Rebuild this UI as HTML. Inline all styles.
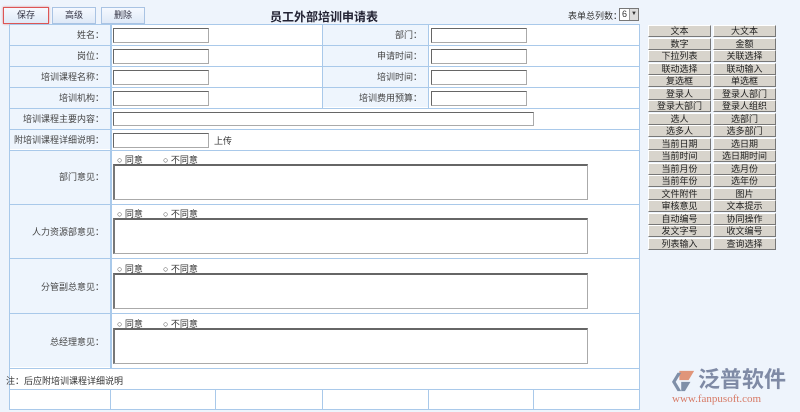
<!DOCTYPE html>
<html><head><meta charset="utf-8"><style>
*{margin:0;padding:0;box-sizing:border-box}
body{width:800px;height:412px;background:#eef4fc;font-family:"Liberation Sans","Noto Sans CJK SC",sans-serif;font-size:9px;color:#333;position:relative;overflow:hidden}
.a{position:absolute}
.btn{position:absolute;top:7px;height:17px;border:1px solid #a9c3e3;background:linear-gradient(#f5f9ff,#dfe9f7);font-size:9px;text-align:center;line-height:15px;color:#334}
.tbl{position:absolute;left:9px;top:24px;width:631px;height:386px;background:#fff;border:1px solid #a9c9ea}
.h{position:absolute;background:#a9c9ea;height:1px}
.v{position:absolute;background:#a9c9ea;width:1px}
.lab{position:absolute;background:#eef5fd;text-align:right;padding-right:6px;font-size:9px;color:#444}
.in{position:absolute;background:#fff;border:1px solid #aaa;border-top-color:#666;border-left-color:#666;height:15px}
.ta{position:absolute;left:113px;width:475px;height:36px;background:#fff;border:1px solid #aaa;border-top:2px solid #666;border-left:2px solid #777}
.rad{position:absolute;left:117px;font-size:9px;color:#333}
.rb{position:absolute;width:63px;height:12px;background:#d8d4cc;border-right:1px solid #777;border-bottom:1px solid #777;border-top:1px solid #fff;border-left:1px solid #fff;font-size:9px;text-align:center;line-height:10px;color:#222}
</style></head><body>
<div class="btn" style="left:3px;width:46px;border:1px solid #d55;box-shadow:0 0 2px #d88">保存</div>
<div class="btn" style="left:52px;width:44px">高级</div>
<div class="btn" style="left:101px;width:44px">删除</div>
<div class="a" style="left:270px;top:8px;font-size:12px;font-weight:bold;color:#223">员工外部培训申请表</div>
<div class="a" style="left:568px;top:9px;font-size:9px">表单总列数：</div>
<div class="a" style="left:619px;top:8px;width:20px;height:13px;border:1px solid #777;background:#fff;font-size:9px;padding-left:2px;line-height:11px">6<span style="position:absolute;right:0;top:0;width:9px;height:11px;background:#ddd;border-left:1px solid #999;font-size:6px;text-align:center">▼</span></div>

<div class="tbl"></div>
<div class="lab" style="left:10px;top:25px;width:100px;height:124px"></div>
<div class="lab" style="left:323px;top:25px;width:105px;height:82px"></div>
<div class="lab" style="left:10px;top:151px;width:100px;height:216px"></div>
<div class="lab" style="left:10px;top:25px;width:100px;line-height:20px;background:none">姓名：</div>
<div class="lab" style="left:10px;top:46px;width:100px;line-height:20px;background:none">岗位：</div>
<div class="lab" style="left:10px;top:67px;width:100px;line-height:20px;background:none">培训课程名称：</div>
<div class="lab" style="left:10px;top:88px;width:100px;line-height:20px;background:none">培训机构：</div>
<div class="lab" style="left:10px;top:109px;width:100px;line-height:20px;background:none">培训课程主要内容：</div>
<div class="lab" style="left:10px;top:130px;width:100px;line-height:20px;background:none">附培训课程详细说明：</div>
<div class="lab" style="left:323px;top:25px;width:105px;line-height:20px;background:none">部门：</div>
<div class="lab" style="left:323px;top:46px;width:105px;line-height:20px;background:none">申请时间：</div>
<div class="lab" style="left:323px;top:67px;width:105px;line-height:20px;background:none">培训时间：</div>
<div class="lab" style="left:323px;top:88px;width:105px;line-height:20px;background:none">培训费用预算：</div>
<div class="lab" style="left:10px;top:170px;width:100px;background:none">部门意见：</div>
<div class="lab" style="left:10px;top:225px;width:100px;background:none">人力资源部意见：</div>
<div class="lab" style="left:10px;top:280px;width:100px;background:none">分管副总意见：</div>
<div class="lab" style="left:10px;top:335px;width:100px;background:none">总经理意见：</div>
<div class="a" style="left:6px;top:374px">注：后应附培训课程详细说明</div>

<div class="h" style="left:9px;top:45px;width:631px"></div>
<div class="h" style="left:9px;top:66px;width:631px"></div>
<div class="h" style="left:9px;top:87px;width:631px"></div>
<div class="h" style="left:9px;top:108px;width:631px"></div>
<div class="h" style="left:9px;top:129px;width:631px"></div>
<div class="h" style="left:9px;top:150px;width:631px"></div>
<div class="h" style="left:9px;top:204px;width:631px"></div>
<div class="h" style="left:9px;top:258px;width:631px"></div>
<div class="h" style="left:9px;top:313px;width:631px"></div>
<div class="h" style="left:9px;top:368px;width:631px"></div>
<div class="h" style="left:9px;top:389px;width:631px"></div>
<div class="v" style="left:110px;top:24px;height:344px;width:2px"></div>
<div class="v" style="left:322px;top:24px;height:84px"></div>
<div class="v" style="left:428px;top:24px;height:84px"></div>
<div class="v" style="left:110px;top:389px;height:21px"></div>
<div class="v" style="left:215px;top:389px;height:21px"></div>
<div class="v" style="left:322px;top:389px;height:21px"></div>
<div class="v" style="left:428px;top:389px;height:21px"></div>
<div class="v" style="left:533px;top:389px;height:21px"></div>

<div class="in" style="left:113px;top:28px;width:96px"></div>
<div class="in" style="left:113px;top:49px;width:96px"></div>
<div class="in" style="left:113px;top:70px;width:96px"></div>
<div class="in" style="left:113px;top:91px;width:96px"></div>
<div class="in" style="left:431px;top:28px;width:96px"></div>
<div class="in" style="left:431px;top:49px;width:96px"></div>
<div class="in" style="left:431px;top:70px;width:96px"></div>
<div class="in" style="left:431px;top:91px;width:96px"></div>
<div class="in" style="left:113px;top:112px;width:421px;height:14px"></div>
<div class="in" style="left:113px;top:133px;width:96px"></div>
<div class="a" style="left:214px;top:134px">上传</div>

<div class="rad" style="top:153px">○ 同意&nbsp;&nbsp;&nbsp;&nbsp;&nbsp;&nbsp;&nbsp;&nbsp;○ 不同意</div>
<div class="ta" style="top:164px"></div>
<div class="rad" style="top:207px">○ 同意&nbsp;&nbsp;&nbsp;&nbsp;&nbsp;&nbsp;&nbsp;&nbsp;○ 不同意</div>
<div class="ta" style="top:218px"></div>
<div class="rad" style="top:262px">○ 同意&nbsp;&nbsp;&nbsp;&nbsp;&nbsp;&nbsp;&nbsp;&nbsp;○ 不同意</div>
<div class="ta" style="top:273px"></div>
<div class="rad" style="top:317px">○ 同意&nbsp;&nbsp;&nbsp;&nbsp;&nbsp;&nbsp;&nbsp;&nbsp;○ 不同意</div>
<div class="ta" style="top:328px"></div>

<div class="rb" style="left:648px;top:25px">文本</div><div class="rb" style="left:713px;top:25px">大文本</div>
<div class="rb" style="left:648px;top:37.5px">数字</div><div class="rb" style="left:713px;top:37.5px">金额</div>
<div class="rb" style="left:648px;top:50px">下拉列表</div><div class="rb" style="left:713px;top:50px">关联选择</div>
<div class="rb" style="left:648px;top:62.5px">联动选择</div><div class="rb" style="left:713px;top:62.5px">联动输入</div>
<div class="rb" style="left:648px;top:75px">复选框</div><div class="rb" style="left:713px;top:75px">单选框</div>
<div class="rb" style="left:648px;top:87.5px">登录人</div><div class="rb" style="left:713px;top:87.5px">登录人部门</div>
<div class="rb" style="left:648px;top:100px">登录大部门</div><div class="rb" style="left:713px;top:100px">登录人组织</div>
<div class="rb" style="left:648px;top:112.5px">选人</div><div class="rb" style="left:713px;top:112.5px">选部门</div>
<div class="rb" style="left:648px;top:125px">选多人</div><div class="rb" style="left:713px;top:125px">选多部门</div>
<div class="rb" style="left:648px;top:137.5px">当前日期</div><div class="rb" style="left:713px;top:137.5px">选日期</div>
<div class="rb" style="left:648px;top:150px">当前时间</div><div class="rb" style="left:713px;top:150px">选日期时间</div>
<div class="rb" style="left:648px;top:162.5px">当前月份</div><div class="rb" style="left:713px;top:162.5px">选月份</div>
<div class="rb" style="left:648px;top:175px">当前年份</div><div class="rb" style="left:713px;top:175px">选年份</div>
<div class="rb" style="left:648px;top:187.5px">文件附件</div><div class="rb" style="left:713px;top:187.5px">图片</div>
<div class="rb" style="left:648px;top:200px">审核意见</div><div class="rb" style="left:713px;top:200px">文本提示</div>
<div class="rb" style="left:648px;top:212.5px">自动编号</div><div class="rb" style="left:713px;top:212.5px">协同操作</div>
<div class="rb" style="left:648px;top:225px">发文字号</div><div class="rb" style="left:713px;top:225px">收文编号</div>
<div class="rb" style="left:648px;top:237.5px">列表输入</div><div class="rb" style="left:713px;top:237.5px">查询选择</div>

<svg class="a" style="left:670px;top:369px" width="28" height="24" viewBox="0 0 30 26">
<path d="M10 2 L26 2 L20 12 L10 12 Z" fill="#e0957a"/>
<path d="M8 4 L2 14 L8 24 L12 24 L6 14 L12 4 Z" fill="#7f8fa8"/>
<path d="M12 14 L22 14 L16 24 L12 24 Z" fill="#7f8fa8"/>
</svg>
<div class="a" style="left:698px;top:367px;font-size:22px;line-height:26px;color:#7f8aa5;font-weight:bold">泛普软件</div>
<div class="a" style="left:672px;top:393px;font-size:11px;line-height:12px;color:#d77a66;font-family:'Liberation Serif',serif">www.fanpusoft.com</div>
</body></html>
